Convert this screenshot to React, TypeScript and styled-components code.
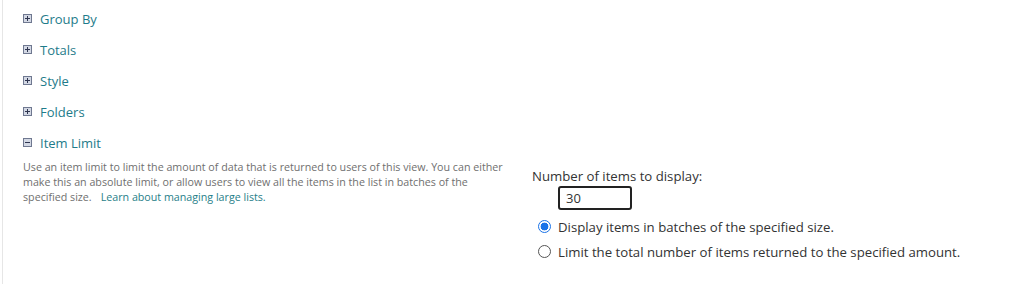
import styled, { createGlobalStyle } from 'styled-components';

const GlobalStyle = createGlobalStyle`
  html, body {
    margin: 0;
    padding: 0;
    background: #fff;
  }
  body {
    font-family: 'Open Sans', 'Liberation Sans', sans-serif;
  }
`;

const Page = styled.div`
  height: 284px;
  margin-left: 2px;
  border-left: 1px solid #e6e6e6;
  padding: 3px 0 0 19px;
  box-sizing: border-box;
`;

const SectionHeader = styled.div`
  display: flex;
  align-items: center;
  height: 31px;
  font-size: 13px;
  color: #1e7b8a;
  cursor: pointer;
`;

const Toggle = styled.svg`
  width: 9px;
  height: 9px;
  margin: 0 8px 0 1px;
  flex-shrink: 0;
`;

const ExpandIcon = ({ open }: { open?: boolean }) => (
  <Toggle viewBox="0 0 9 9">
    <rect x="0.5" y="0.5" width="8" height="8" fill="#d3d8e4" stroke="#6f7890" />
    <rect x="2" y="4" width="5" height="1" fill="#2f3650" />
    {!open && <rect x="4" y="2" width="1" height="5" fill="#2f3650" />}
  </Toggle>
);

const LimitBody = styled.div`
  display: grid;
  grid-template-columns: 490px 1fr;
  column-gap: 20px;
  margin-top: -1px;
`;

const Description = styled.p`
  margin: 3px 0 0 1px;
  max-width: 482px;
  font-size: 10.7px;
  line-height: 15px;
  color: #6f6f6f;
`;

const HelpLink = styled.a`
  color: #1f8089;
  text-decoration: none;
  margin-left: 9px;
`;

const Options = styled.div`
  display: flex;
  flex-direction: column;
  padding-top: 10px;
  font-size: 13.2px;
  color: #333;
`;

const FieldLabel = styled.label`
  line-height: 18px;
`;

const CountInput = styled.input`
  width: 74px;
  height: 24px;
  box-sizing: border-box;
  margin: 1px 0 0 26px;
  padding: 0 6px;
  border: 2px solid #222;
  border-radius: 3px;
  font-family: inherit;
  font-size: 13px;
  color: #333;
  outline: none;
`;

const RadioRow = styled.label`
  display: flex;
  align-items: center;
  height: 25px;
  margin-left: 6px;
  gap: 7px;
`;

const RadioGroup = styled.div`
  margin-top: 4px;
`;

const Radio = styled.span<{ checked?: boolean }>`
  width: 13px;
  height: 13px;
  box-sizing: border-box;
  border-radius: 50%;
  border: 1px solid ${(p) => (p.checked ? '#1a73e8' : '#555')};
  background: ${(p) => (p.checked ? 'radial-gradient(circle, #1a73e8 0 3.6px, #fff 4.2px)' : '#fff')};
`;

const sections = ['Group By', 'Totals', 'Style', 'Folders'];

const App = () => {
  return (
    <>
      <GlobalStyle />
      <Page>
        {sections.map((s) => (
          <SectionHeader key={s}>
            <ExpandIcon />
            {s}
          </SectionHeader>
        ))}
        <SectionHeader>
          <ExpandIcon open />
          Item Limit
        </SectionHeader>
        <LimitBody>
          <Description>
            Use an item limit to limit the amount of data that is returned to users of this view. You can either make
            this an absolute limit, or allow users to view all the items in the list in batches of the specified size.
            <HelpLink href="#">Learn about managing large lists.</HelpLink>
          </Description>
          <Options>
            <FieldLabel>Number of items to display:</FieldLabel>
            <CountInput defaultValue="30" />
            <RadioGroup>
              <RadioRow>
                <Radio checked />
                Display items in batches of the specified size.
              </RadioRow>
              <RadioRow>
                <Radio />
                Limit the total number of items returned to the specified amount.
              </RadioRow>
            </RadioGroup>
          </Options>
        </LimitBody>
      </Page>
    </>
  );
};

export default App;
